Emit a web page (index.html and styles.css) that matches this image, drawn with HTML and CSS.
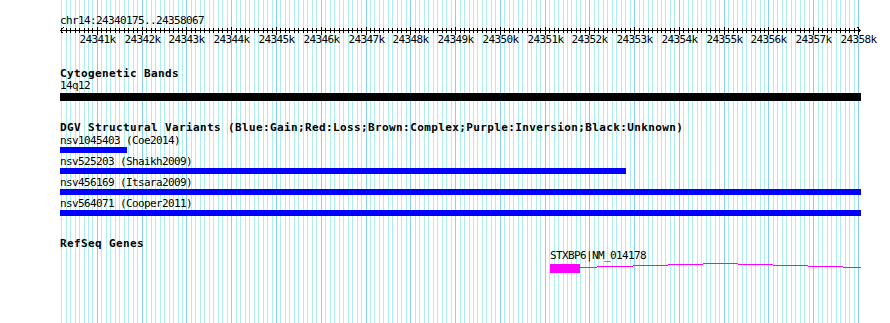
FILE: index.html
```html
<!DOCTYPE html>
<html lang="en">
<head>
    <meta charset="UTF-8">
    <title>chr14:24340175..24358067 - Genome Browser</title>
    <link rel="stylesheet" href="styles.css">
</head>
<body>
    <div class="browser">
        <svg class="grid" id="grid" width="801" height="323"></svg>

        <div class="ruler">
            <div class="label">chr14:24340175..24358067</div>
            <svg class="scale" id="scale" width="801" height="20">
                <path class="axis" d="M0 3.5H801 M3.5 0.5L0.5 3.5L3.5 6.5 M797.5 0.5L800.5 3.5L797.5 6.5"/>
            </svg>
        </div>

        <div class="track">
            <div class="track-title">Cytogenetic Bands</div>
            <div class="label">14q12</div>
            <div class="band"></div>
        </div>

        <div class="track">
            <div class="track-title">DGV Structural Variants (Blue:Gain;Red:Loss;Brown:Complex;Purple:Inversion;Black:Unknown)</div>
            <div class="variant">
                <div class="label">nsv1045403 (Coe2014)</div>
                <div class="bar gain" style="width: 67px;"></div>
            </div>
            <div class="variant">
                <div class="label">nsv525203 (Shaikh2009)</div>
                <div class="bar gain" style="width: 566px;"></div>
            </div>
            <div class="variant">
                <div class="label">nsv456169 (Itsara2009)</div>
                <div class="bar gain" style="width: 801px;"></div>
            </div>
            <div class="variant">
                <div class="label">nsv564071 (Cooper2011)</div>
                <div class="bar gain" style="width: 801px;"></div>
            </div>
        </div>

        <div class="track genes">
            <div class="track-title">RefSeq Genes</div>
            <div class="label" style="margin-left: 490px;">STXBP6|NM_014178</div>
            <svg class="gene" width="801" height="14">
                <rect class="exon" x="490" y="2" width="30" height="9"/>
                <path class="intron" d="M520 5.5H537 M537 4.5H573 M573 3.5H608 M608 2.5H643 M643 1.5H678 M678 2.5H713 M713 3.5H748 M748 4.5H783 M783 5.5H801"/>
            </svg>
        </div>
    </div>

    <script src="script.js"></script>
</body>
</html>
```

FILE: styles.css
```css
body {
    margin: 0;
    background: white;
    overflow: hidden;
    font-family: 'DejaVu Sans Mono', 'Liberation Mono', monospace;
}
.browser {
    position: relative;
    z-index: 0;
    width: 801px;
    height: 323px;
    margin-left: 60px;
}
.grid {
    position: absolute;
    top: 0;
    left: 0;
    z-index: -1;
    shape-rendering: crispEdges;
}
.grid .minor {
    stroke: #aeeeee;
}
.grid .major {
    stroke: #87cefa;
}
.label {
    font-size: 11px;
    line-height: 12px;
    letter-spacing: -0.62px;
    color: black;
    white-space: nowrap;
}
.ruler {
    padding-top: 15px;
}
.scale {
    display: block;
    overflow: visible;
    shape-rendering: crispEdges;
}
.scale line,
.scale .axis {
    stroke: black;
    fill: none;
}
.scale text {
    font-family: 'DejaVu Sans Mono', 'Liberation Mono', monospace;
    font-size: 11px;
    letter-spacing: -0.62px;
    text-anchor: middle;
    fill: black;
}
.track {
    margin-top: 21px;
}
.genes {
    margin-top: 22px;
}
.track-title {
    font-size: 11px;
    font-weight: bold;
    line-height: 12px;
    letter-spacing: 0.38px;
    color: black;
    white-space: nowrap;
}
.band {
    margin-top: 1px;
    height: 8px;
    background: black;
}
.variant {
    margin-top: 3px;
}
.track-title + .variant {
    margin-top: 1px;
}
.bar {
    height: 6px;
}
.bar.gain {
    background: #0000ff;
}
.gene {
    display: block;
    shape-rendering: crispEdges;
}
.exon {
    fill: #ff00ff;
}
.intron {
    stroke: #ff00ff;
    fill: none;
}
```

FILE: script.js
```js
// grid lines and scale ticks for chr14:24340175..24358067
var START = 24340175;
var END = 24358067;
var WIDTH = 801;
var SVG = 'http://www.w3.org/2000/svg';

function toX(bp) {
    return Math.round((bp - START) * WIDTH / (END - START)) + 0.5;
}

function add(parent, tag, attrs, text) {
    var el = document.createElementNS(SVG, tag);
    for (var k in attrs) el.setAttribute(k, attrs[k]);
    if (text) el.textContent = text;
    parent.appendChild(el);
    return el;
}

var grid = document.getElementById('grid');
var scale = document.getElementById('scale');

for (var bp = Math.ceil(START / 100) * 100; bp <= END; bp += 100) {
    var x = toX(bp);
    var major = bp % 1000 === 0;
    add(grid, 'line', { x1: x, y1: 0, x2: x, y2: 323, 'class': major ? 'major' : 'minor' });
    add(scale, 'line', { x1: x, y1: major ? 0 : 1, x2: x, y2: major ? 8 : 6 });
    if (major) add(scale, 'text', { x: x, y: 16 }, (bp / 1000) + 'k');
}
```
